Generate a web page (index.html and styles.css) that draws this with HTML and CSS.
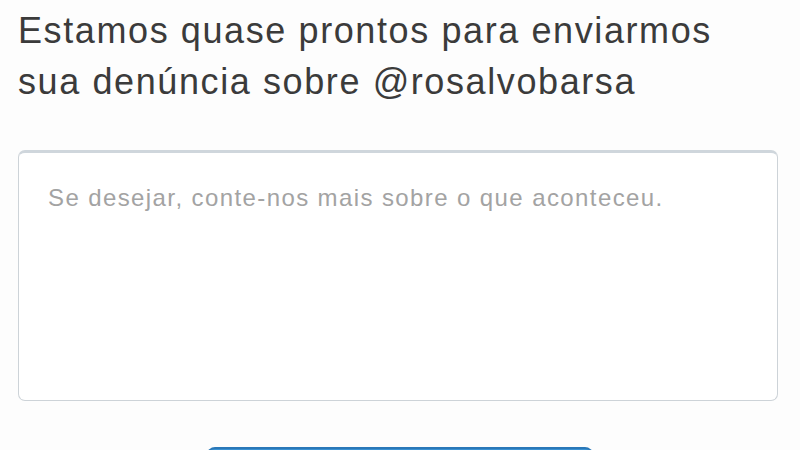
FILE: index.html
```
<!DOCTYPE HTML>
<html>
<head>
<meta http-equiv="Content-Type" content="text/html; charset=utf-8">
<title>Denúncia</title>
<link rel="stylesheet" href="styles.css">
</head>
<body>

<div class="page">
	<h1 class="title">Estamos quase prontos para enviarmos sua denúncia sobre @rosalvobarsa</h1>
	<textarea class="details" placeholder="Se desejar, conte-nos mais sobre o que aconteceu."></textarea>
	<div class="actions">
		
		<button type="button" class="sendButton" aria-label="Enviar"></button>
	</div>
</div>

</body>
</html>
```

FILE: styles.css
```
body{
	margin:0px;
	background:#fdfdfd;
	font-family:"Liberation Sans", Arial, Helvetica, sans-serif;
	overflow:hidden;
}

.page{
	padding:5px 22px 0 18px;
}

.title{
	margin:0px;
	font-size:36px;
	font-weight:normal;
	line-height:51px;
	letter-spacing:1.6px;
	color:#3b3b3b;
	width:740px;
}

.details{
	display:block;
	box-sizing:border-box;
	width:760px;
	height:251px;
	margin-top:43px;
	padding:31px 29px;
	border:1px solid #cdd3d8;
	border-top:3px solid #cfd6dc;
	border-radius:7px;
	background:#fff;
	font-family:"Liberation Sans", Arial, Helvetica, sans-serif;
	font-size:24px;
	letter-spacing:1.4px;
	color:#333;
	resize:none;
	outline:none;
}

.details::placeholder{
	color:#a3a3a3;
}

.actions{
	display:flex;
	justify-content:center;
	padding-top:46px;
}

.sendButton{
	width:386px;
	height:54px;
	margin-left:4px;
	border:none;
	border-top:2px solid #2a78b8;
	border-radius:8px;
	background:#3b92d3;
}
```
